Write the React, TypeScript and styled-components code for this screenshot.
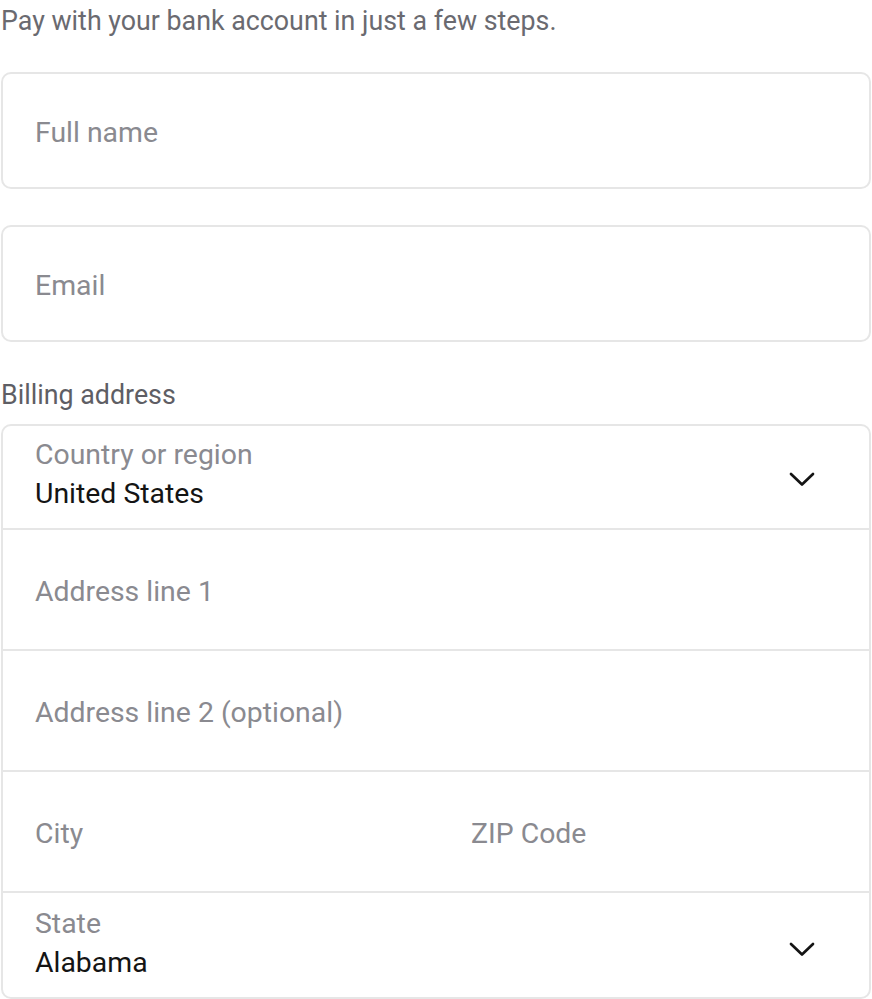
import React from "react";
import styled, { createGlobalStyle } from "styled-components";

const GlobalStyle = createGlobalStyle`
  html, body { margin: 0; padding: 0; background: #ffffff; }
  body { font-family: Roboto, "Noto Sans", "Liberation Sans", sans-serif; }
  * { box-sizing: border-box; }
`;

const Page = styled.div`
  width: 872px;
  padding: 0 1px;
  display: flex;
  flex-direction: column;
`;

const Intro = styled.p`
  margin: 5px 0 0 0;
  font-size: 26.8px;
  line-height: 32px;
  color: #6a6a70;
`;

const Box = styled.div<{ $top: number }>`
  margin-top: ${(p) => p.$top}px;
  height: 117px;
  border: 2px solid #e6e6e6;
  border-radius: 10px;
  display: flex;
  align-items: center;
  padding: 4px 0 0 32px;
  font-size: 28.4px;
  color: #8a8a90;
`;

const SectionLabel = styled.div`
  margin-top: 37px;
  font-size: 26.8px;
  line-height: 32px;
  color: #5e5e64;
`;

const Group = styled.div`
  margin-top: 13px;
  border: 2px solid #e6e6e6;
  border-radius: 10px;
  display: flex;
  flex-direction: column;
`;

const Row = styled.div`
  height: 121px;
  border-top: 2px solid #e6e6e6;
  display: flex;
  align-items: center;
  padding: 4px 0 0 32px;
  font-size: 28.4px;
  color: #8a8a90;
`;

const SplitRow = styled.div`
  height: 121px;
  border-top: 2px solid #e6e6e6;
  display: grid;
  grid-template-columns: 1fr 1fr;
  column-gap: 6px;
  align-items: center;
  padding-top: 4px;
  font-size: 28.4px;
  color: #8a8a90;
`;

const Cell = styled.div`
  padding-left: 32px;
`;

const SelectRow = styled.div<{ $h: number; $pad: number; $first?: boolean }>`
  height: ${(p) => p.$h}px;
  border-top: ${(p) => (p.$first ? "none" : "2px solid #e6e6e6")};
  display: flex;
  align-items: flex-start;
  justify-content: space-between;
  padding: ${(p) => p.$pad}px 54px 0 32px;
`;

const SelectText = styled.div`
  display: flex;
  flex-direction: column;
`;

const SelectLabel = styled.span`
  font-size: 28.4px;
  line-height: 37px;
  color: #8a8a90;
`;

const SelectValue = styled.span`
  font-size: 28.4px;
  line-height: 42px;
  color: #141414;
`;

const ChevronWrap = styled.div<{ $dy: number }>`
  align-self: center;
  display: flex;
  margin-top: ${(p) => p.$dy}px;
`;

const Chevron = ({ dy }: { dy: number }) => (
  <ChevronWrap $dy={dy}>
    <svg width="26" height="15" viewBox="0 0 26 15" fill="none">
      <path d="M2 2 L13 12.5 L24 2" stroke="#141414" strokeWidth="2.7" strokeLinecap="round" strokeLinejoin="round" />
    </svg>
  </ChevronWrap>
);

export default function App() {
  return (
    <Page>
      <GlobalStyle />
      <Intro>Pay with your bank account in just a few steps.</Intro>
      <Box $top={35}>Full name</Box>
      <Box $top={36}>Email</Box>
      <SectionLabel>Billing address</SectionLabel>
      <Group>
        <SelectRow $h={102} $pad={10} $first>
          <SelectText>
            <SelectLabel>Country or region</SelectLabel>
            <SelectValue>United States</SelectValue>
          </SelectText>
          <Chevron dy={-6} />
        </SelectRow>
        <Row>Address line 1</Row>
        <Row>Address line 2 (optional)</Row>
        <SplitRow>
          <Cell>City</Cell>
          <Cell>ZIP Code</Cell>
        </SplitRow>
        <SelectRow $h={106} $pad={12}>
          <SelectText>
            <SelectLabel>State</SelectLabel>
            <SelectValue>Alabama</SelectValue>
          </SelectText>
          <Chevron dy={-4} />
        </SelectRow>
      </Group>
    </Page>
  );
}
